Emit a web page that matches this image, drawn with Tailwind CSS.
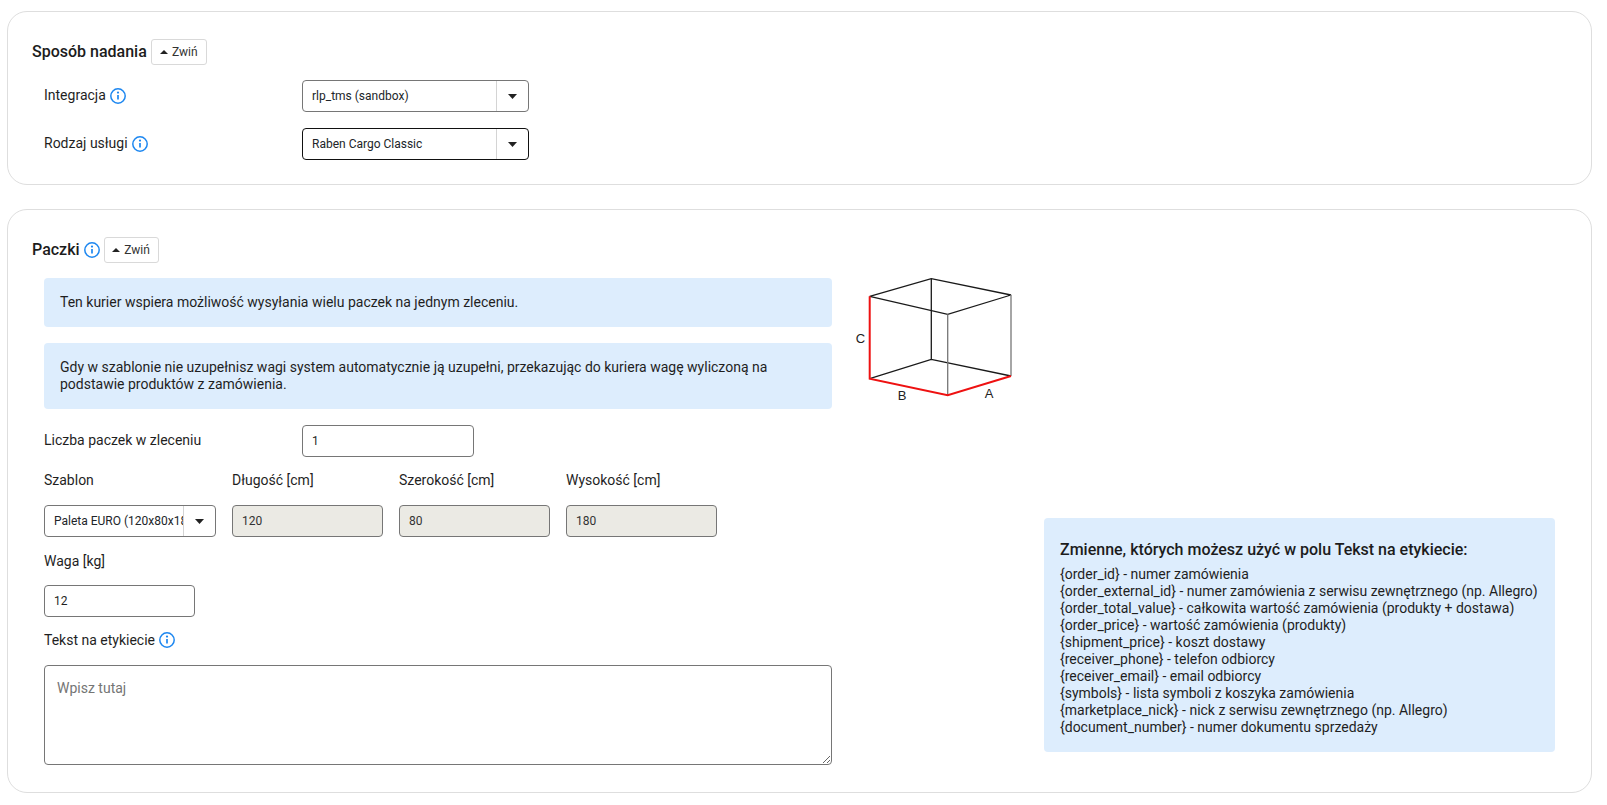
<!DOCTYPE html>
<html lang="pl">
<head>
    <meta charset="UTF-8">
    <title>Sposób nadania</title>
    <script src="https://cdn.jsdelivr.net/npm/@tailwindcss/browser@4"></script>
</head>
<body class="bg-white font-['Roboto',sans-serif] text-[14px] text-[#1f1f1f] overflow-hidden">

    <div class="w-[1607px] h-[805px] pt-[11px] pl-[7px]">

        <!-- Sposob nadania -->
        <section class="w-[1585px] h-[174px] border border-[#dedede] rounded-[20px] pt-[27px] pl-[24px]">
            <div class="flex items-center h-[26px]">
                <h2 class="text-[16px] leading-[26px] font-medium text-[#1c1c1c]">Sposób nadania</h2>
                <button class="ml-[4px] w-[56px] h-[26px] border border-[#d9d9d9] rounded-[3px] flex items-center justify-center gap-[4px] text-[12px] text-[#333]">
                    <svg class="w-[8px] h-[4px]" viewBox="0 0 8 4"><path d="M4 0L8 4H0z" fill="#222"/></svg>
                    Zwiń
                </button>
            </div>
            <div class="flex items-center h-[32px] mt-[15px] pl-[12px]">
                <label class="w-[258px] flex items-center gap-[4px] -mt-[1px]">
                    Integracja
                    <svg class="w-[16px] h-[16px]" viewBox="0 0 16 16" fill="none" stroke="#1d87f0"><circle cx="8" cy="8" r="7.2" stroke-width="1.5"/><path d="M8 7v4.6" stroke-width="1.7"/><circle cx="8" cy="4.6" r="1.1" fill="#1d87f0" stroke="none"/></svg>
                </label>
                <div class="relative w-[227px] h-[32px]">
                    <select class="appearance-none w-full h-full bg-white border border-[#767676] rounded-[4px] pl-[9px] pr-[36px] text-[12px] text-[#212529]">
                        <option>rlp_tms (sandbox)</option>
                    </select>
                    <div class="absolute right-[1px] top-[1px] bottom-[1px] w-[32px] border-l border-[#d4d4d4] flex items-center justify-center pointer-events-none">
                        <svg class="w-[9px] h-[5px]" viewBox="0 0 9 5"><path d="M0 0h9L4.5 5z" fill="#222"/></svg>
                    </div>
                </div>
            </div>
            <div class="flex items-center h-[32px] mt-[16px] pl-[12px]">
                <label class="w-[258px] flex items-center gap-[4px] -mt-[1px]">
                    Rodzaj usługi
                    <svg class="w-[16px] h-[16px]" viewBox="0 0 16 16" fill="none" stroke="#1d87f0"><circle cx="8" cy="8" r="7.2" stroke-width="1.5"/><path d="M8 7v4.6" stroke-width="1.7"/><circle cx="8" cy="4.6" r="1.1" fill="#1d87f0" stroke="none"/></svg>
                </label>
                <div class="relative w-[227px] h-[32px]">
                    <select class="appearance-none w-full h-full bg-white border border-[#111] rounded-[4px] pl-[9px] pr-[36px] text-[12px] text-[#212529]">
                        <option>Raben Cargo Classic</option>
                    </select>
                    <div class="absolute right-[1px] top-[1px] bottom-[1px] w-[32px] border-l border-[#d4d4d4] flex items-center justify-center pointer-events-none">
                        <svg class="w-[9px] h-[5px]" viewBox="0 0 9 5"><path d="M0 0h9L4.5 5z" fill="#222"/></svg>
                    </div>
                </div>
            </div>
        </section>

        <!-- Paczki -->
        <section class="w-[1585px] h-[584px] mt-[24px] border border-[#dedede] rounded-[20px] pt-[27px] pl-[24px]">
            <div class="flex items-center h-[26px]">
                <h2 class="text-[16px] leading-[26px] font-medium text-[#1c1c1c]">Paczki</h2>
                <svg class="ml-[4px] w-[16px] h-[16px]" viewBox="0 0 16 16" fill="none" stroke="#1d87f0"><circle cx="8" cy="8" r="7.2" stroke-width="1.5"/><path d="M8 7v4.6" stroke-width="1.7"/><circle cx="8" cy="4.6" r="1.1" fill="#1d87f0" stroke="none"/></svg>
                <button class="ml-[4px] w-[55px] h-[26px] border border-[#d9d9d9] rounded-[3px] flex items-center justify-center gap-[4px] text-[12px] text-[#333]">
                    <svg class="w-[8px] h-[4px]" viewBox="0 0 8 4"><path d="M4 0L8 4H0z" fill="#222"/></svg>
                    Zwiń
                </button>
            </div>

            <div class="flex pl-[12px] mt-[15px]">
                <!-- lewa kolumna -->
                <div class="w-[788px] shrink-0">
                    <div class="h-[49px] bg-[#ddedfd] rounded-[4px] px-[16px] flex items-center">Ten kurier wspiera możliwość wysyłania wielu paczek na jednym zleceniu.</div>
                    <div class="h-[66px] mt-[16px] bg-[#ddedfd] rounded-[4px] px-[16px] flex items-center leading-[17px]">Gdy w szablonie nie uzupełnisz wagi system automatycznie ją uzupełni, przekazując do kuriera wagę wyliczoną na podstawie produktów z zamówienia.</div>

                    <div class="flex items-center mt-[16px] h-[32px]">
                        <label class="w-[258px] -mt-[2px]">Liczba paczek w zleceniu</label>
                        <input value="1" class="w-[172px] h-[32px] border border-[#767676] rounded-[4px] pl-[9px] text-[12px]">
                    </div>

                    <div class="grid grid-cols-[172px_151px_151px_151px] gap-x-[16px] mt-[13px]">
                        <label class="leading-[20px]">Szablon</label>
                        <label class="leading-[20px]">Długość [cm]</label>
                        <label class="leading-[20px]">Szerokość [cm]</label>
                        <label class="leading-[20px]">Wysokość [cm]</label>
                        <div class="relative h-[32px] mt-[15px]">
                            <select class="appearance-none w-full h-full bg-white border border-[#767676] rounded-[4px] pl-[9px] pr-[32px] text-[12px] text-[#212529]">
                                <option>Paleta EURO (120x80x180)</option>
                            </select>
                            <div class="absolute right-[1px] top-[1px] bottom-[1px] w-[32px] border-l border-[#d4d4d4] flex items-center justify-center pointer-events-none">
                                <svg class="w-[9px] h-[5px]" viewBox="0 0 9 5"><path d="M0 0h9L4.5 5z" fill="#222"/></svg>
                            </div>
                        </div>
                        <input disabled value="120" class="mt-[15px] h-[32px] bg-[#ebeae4] border border-[#767676] rounded-[4px] pl-[9px] text-[12px] text-[#333]">
                        <input disabled value="80" class="mt-[15px] h-[32px] bg-[#ebeae4] border border-[#767676] rounded-[4px] pl-[9px] text-[12px] text-[#333]">
                        <input disabled value="180" class="mt-[15px] h-[32px] bg-[#ebeae4] border border-[#767676] rounded-[4px] pl-[9px] text-[12px] text-[#333]">
                    </div>

                    <label class="block leading-[20px] mt-[14px]">Waga [kg]</label>
                    <input value="12" class="block mt-[14px] w-[151px] h-[32px] border border-[#767676] rounded-[4px] pl-[9px] text-[12px]">

                    <label class="flex items-center gap-[4px] mt-[13px] h-[20px]">
                        Tekst na etykiecie
                        <svg class="w-[16px] h-[16px]" viewBox="0 0 16 16" fill="none" stroke="#1d87f0"><circle cx="8" cy="8" r="7.2" stroke-width="1.5"/><path d="M8 7v4.6" stroke-width="1.7"/><circle cx="8" cy="4.6" r="1.1" fill="#1d87f0" stroke="none"/></svg>
                    </label>
                    <textarea placeholder="Wpisz tutaj" class="block mt-[15px] w-[788px] h-[100px] border border-[#767676] rounded-[4px] px-[12px] py-[12px] placeholder:text-[#757575]"></textarea>
                </div>

                <!-- prawa kolumna -->
                <div class="flex-1 flex flex-col justify-between pl-[16px]">
                    <svg class="w-[180px] h-[140px] -mt-[2px]" viewBox="848 276 180 140" fill="none">
                        <g stroke="#1a1a1a" stroke-width="1.3">
                            <path d="M869.7 296.3L931.3 278.7L1011 295L947.7 314.3Z"/>
                            <path d="M931.3 278.7V359.3M869.7 378.7L931.3 359.3L1011 376"/>
                        </g>
                        <g stroke="#777" stroke-width="1.3">
                            <path d="M947.7 314.3V395.3M1011 295V376"/>
                        </g>
                        <path d="M869.7 296.3V378.7L947.7 395.3L1011 376" stroke="#ee1111" stroke-width="2"/>
                        <g fill="#222" font-family="Liberation Sans, sans-serif" font-size="13" text-anchor="middle">
                            <text x="860.5" y="343">C</text>
                            <text x="902" y="400">B</text>
                            <text x="989" y="398">A</text>
                        </g>
                    </svg>
                    <div class="w-[511px] h-[234px] mb-[13px] self-end mr-[36px] bg-[#ddedfd] rounded-[4px] px-[16px] pt-[22px]">
                        <h3 class="text-[16px] leading-[20px] font-medium text-[#1c1c1c] mb-[6px]">Zmienne, których możesz użyć w polu Tekst na etykiecie:</h3>
                        <ul class="leading-[17px]">
                            <li>{order_id} - numer zamówienia</li>
                            <li>{order_external_id} - numer zamówienia z serwisu zewnętrznego (np. Allegro)</li>
                            <li>{order_total_value} - całkowita wartość zamówienia (produkty + dostawa)</li>
                            <li>{order_price} - wartość zamówienia (produkty)</li>
                            <li>{shipment_price} - koszt dostawy</li>
                            <li>{receiver_phone} - telefon odbiorcy</li>
                            <li>{receiver_email} - email odbiorcy</li>
                            <li>{symbols} - lista symboli z koszyka zamówienia</li>
                            <li>{marketplace_nick} - nick z serwisu zewnętrznego (np. Allegro)</li>
                            <li>{document_number} - numer dokumentu sprzedaży</li>
                        </ul>
                    </div>
                </div>
            </div>
        </section>
    </div>

</body>
</html>
